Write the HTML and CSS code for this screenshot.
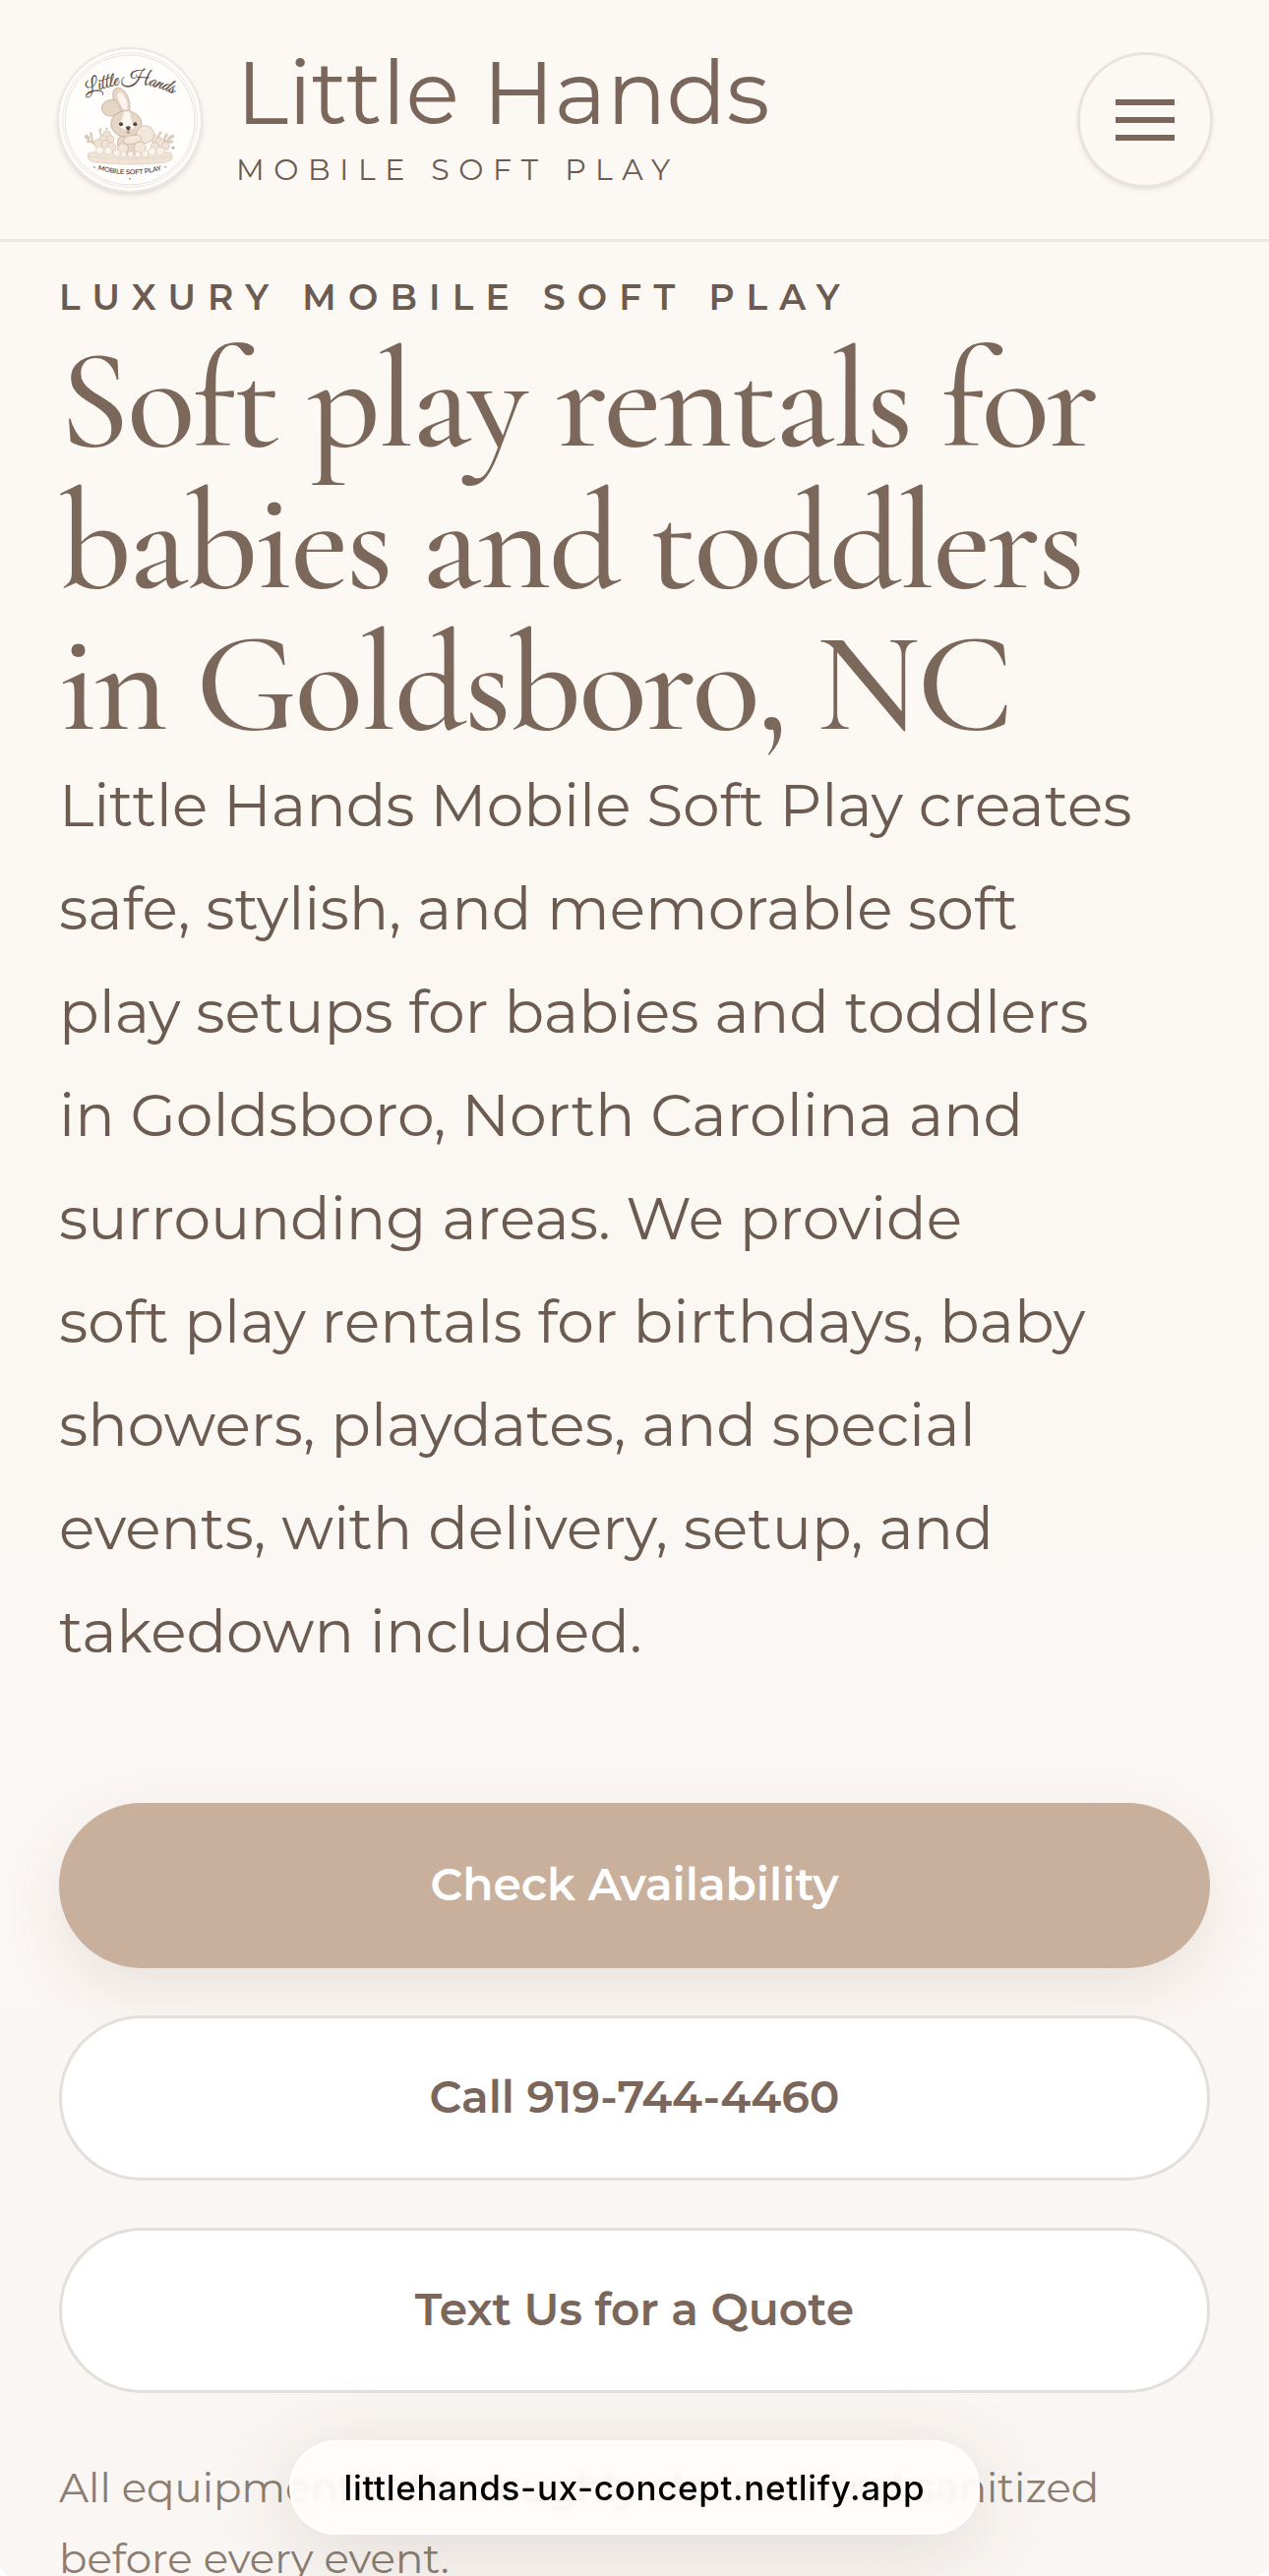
FILE: index.html
```html
<!DOCTYPE html>
<html lang="en">
<head>
    <meta charset="UTF-8">
    <meta name="viewport" content="width=device-width, initial-scale=1.0">
    <title>Little Hands Mobile Soft Play</title>
    <link rel="stylesheet" href="styles.css">
</head>
<body>
    <div class="page">
        <header class="site-header">
            <a class="brand" href="#">
                <svg class="brand-logo" viewBox="60 57 432 432" aria-hidden="true">
                    <defs>
                        <path id="arcTop" d="M142 202 Q276 126 418 198"/>
                        <path id="arcBottom" d="M178 424 Q276 454 378 424"/>
                    </defs>
                    <circle cx="276" cy="273" r="216" fill="#fffefc"/>
                    <circle cx="276" cy="273" r="205" fill="none" stroke="#e9e5e1" stroke-width="3"/>
                    <circle cx="276" cy="273" r="198" fill="none" stroke="#d8d0c9" stroke-width="2"/>
                    <text class="logo-script"><textPath href="#arcTop" textLength="276">Little Hands</textPath></text>
                    <!-- flowers -->
                    <g fill="none" stroke="#cbbdad" stroke-width="4">
                        <path d="M172 350 Q152 334 138 324M166 344 Q158 326 160 314M198 340 Q186 318 184 304"/>
                        <path d="M372 346 Q392 332 410 324M382 340 Q380 324 388 316M362 340 Q360 324 370 312"/>
                    </g>
                    <g fill="#dccdbd">
                        <ellipse cx="147" cy="324" rx="10" ry="5" transform="rotate(35 147 324)"/>
                        <ellipse cx="158" cy="318" rx="9" ry="4" transform="rotate(75 158 318)"/>
                        <ellipse cx="153" cy="338" rx="10" ry="5"/>
                        <ellipse cx="401" cy="325" rx="11" ry="5" transform="rotate(-30 401 325)"/>
                        <ellipse cx="387" cy="321" rx="9" ry="4" transform="rotate(-70 387 321)"/>
                        <ellipse cx="399" cy="339" rx="11" ry="5"/>
                        <circle cx="186" cy="303" r="5"/><circle cx="205" cy="300" r="4"/><circle cx="369" cy="312" r="5"/>
                        <circle cx="408" cy="358" r="4" fill="#b5a797"/>
                    </g>
                    <g fill="#f0e3d5" stroke="#d3bfab" stroke-width="2">
                        <circle cx="206" cy="318" r="12"/><circle cx="216" cy="332" r="12"/><circle cx="195" cy="332" r="12"/>
                        <circle cx="180" cy="344" r="13"/><circle cx="202" cy="348" r="13"/><circle cx="220" cy="354" r="13"/>
                        <circle cx="350" cy="330" r="13"/><circle cx="368" cy="340" r="13"/><circle cx="385" cy="352" r="12"/>
                        <circle cx="352" cy="354" r="13"/>
                    </g>
                    <!-- cushion -->
                    <path d="M148 380 Q148 371 160 371H392Q405 371 405 382V390Q399 401 372 404Q276 413 178 403Q150 399 148 389Z" fill="#f0e4d7" stroke="#d8c7b5" stroke-width="2"/>
                    <path d="M150 384Q276 398 404 384M200 390V404M240 393V407M300 393V408M352 390V405" fill="none" stroke="#dfd1c1" stroke-width="2"/>
                    <!-- bunny -->
                    <g fill="#e6d6c6" stroke="#bba590" stroke-width="2">
                        <path d="M246 255 C220 217 217 178 237 175 C260 172 284 215 274 251Z"/>
                        <path d="M242 252 C221 270 191 260 190 238 C190 220 209 207 231 213 Q242 222 250 244Z"/>
                        <ellipse cx="278" cy="344" rx="40" ry="36"/>
                        <ellipse cx="265" cy="285" rx="47" ry="40"/>
                    </g>
                    <path d="M255 239 C238 211 234 191 243 188 C256 188 272 214 268 242Z" fill="#fbf4ee"/>
                    <path d="M258 247 Q254 273 243 291 Q268 315 292 294 Q277 276 276 247Z" fill="#fbf5ef"/>
                    <g fill="#f3e7db" stroke="#c8b39e" stroke-width="2">
                        <circle cx="323" cy="317" r="27"/>
                        <path d="M309 321 Q275 315 258 329 Q253 343 268 346 Q297 347 311 334Z"/>
                        <circle cx="255" cy="360" r="16"/><circle cx="307" cy="357" r="18"/>
                    </g>
                    <g fill="#fbf3ea" stroke="#dccbb9" stroke-width="2">
                        <circle cx="184" cy="365" r="12"/><circle cx="210" cy="367" r="12"/><circle cx="236" cy="374" r="11"/>
                        <circle cx="257" cy="377" r="9"/><circle cx="278" cy="378" r="9"/><circle cx="300" cy="378" r="9"/>
                        <circle cx="323" cy="376" r="10"/><circle cx="344" cy="370" r="12"/><circle cx="369" cy="368" r="12"/>
                    </g>
                    <circle cx="249" cy="286" r="6" fill="#54463e"/>
                    <circle cx="292" cy="286" r="6" fill="#54463e"/>
                    <path d="M263 295 Q271 289 279 295 Q276 305 271 305 Q266 304 263 295Z" fill="#5d4c43"/>
                    <path d="M271 304V310M265 310Q271 316 277 310" fill="none" stroke="#765f52" stroke-width="2"/>
                    <g fill="#efcebf" opacity=".6"><circle cx="247" cy="306" r="7"/><circle cx="294" cy="306" r="7"/></g>
                    <text class="logo-small"><textPath href="#arcBottom" textLength="198">MOBILE SOFT PLAY</textPath></text>
                    <g fill="#aaa099"><circle cx="168" cy="417" r="3"/><circle cx="385" cy="416" r="3"/><circle cx="276" cy="452" r="3"/></g>
                </svg>
                <span class="brand-text">
                    <span class="brand-name">Little Hands</span>
                    <span class="brand-tag">MOBILE SOFT PLAY</span>
                </span>
            </a>
            <button class="menu-toggle" aria-label="Menu">
                <span></span>
                <span></span>
                <span></span>
            </button>
        </header>

        <main class="hero">
            <p class="eyebrow">LUXURY MOBILE SOFT PLAY</p>
            <h1>
                Soft play rentals for<br>
                babies and toddlers<br>
                in Goldsboro, NC
            </h1>
            <p class="lead">
                Little Hands Mobile Soft Play creates<br>
                safe, stylish, and memorable soft<br>
                play setups for babies and toddlers<br>
                in Goldsboro, North Carolina and<br>
                surrounding areas. We provide<br>
                soft play rentals for birthdays, baby<br>
                showers, playdates, and special<br>
                events, with delivery, setup, and<br>
                takedown included.
            </p>
            <div class="actions">
                <a class="btn btn-primary" href="#">Check Availability</a>
                <a class="btn" href="#">Call 919-744-4460</a>
                <a class="btn" href="#">Text Us for a Quote</a>
            </div>
            <p class="note">All equipment is thoroughly cleaned and sanitized<br>before every event.</p>
        </main>

        <div class="url-pill">littlehands-ux-concept.netlify.app</div>
    </div>
</body>
</html>
```

FILE: styles.css
```css
* {
    box-sizing: border-box;
}
html {
    background: #fff;
}
body {
    margin: 0;
    font-family: Montserrat, Inter, "Open Sans", sans-serif;
    color: #6b5b50;
}
a {
    color: inherit;
    text-decoration: none;
}
.page {
    position: relative;
    height: 2619px;
    overflow: hidden;
    background: linear-gradient(#fcf8f4, #faf6f3);
    border-radius: 0 0 14px 14px;
}

/* header */
.site-header {
    display: flex;
    justify-content: space-between;
    align-items: center;
    height: 246px;
    padding: 0 60px;
    border-bottom: 3px solid #ebe7e3;
}
.brand {
    display: flex;
    align-items: center;
    gap: 36px;
}
.brand-logo {
    width: 144px;
    height: 144px;
    border-radius: 50%;
    box-shadow: 0 0 0 2px #ebe7e4, 0 3px 6px rgba(90, 75, 65, 0.25);
}
.logo-script {
    font-family: "Great Vibes", "Dancing Script", "Liberation Serif", cursive;
    font-size: 60px;
    fill: #54453e;
    stroke: #54453e;
    stroke-width: 0.6px;
}
.logo-small {
    font-size: 21px;
    font-weight: 600;
    fill: #6b5d54;
}
.brand-text {
    display: flex;
    flex-direction: column;
    gap: 16px;
    margin-top: -4px;
    white-space: nowrap;
}
.brand-name {
    font-size: 90px;
    line-height: 90px;
    color: #7a665a;
}
.brand-tag {
    font-size: 30px;
    line-height: 36px;
    letter-spacing: 0.32em;
}
.menu-toggle {
    display: flex;
    flex-direction: column;
    justify-content: center;
    align-items: center;
    gap: 12px;
    width: 132px;
    height: 132px;
    padding: 0;
    border: 0;
    border-radius: 50%;
    background: #fcf9f4;
    box-shadow: 0 0 0 3px #e8e3df, 0 3px 6px rgba(90, 75, 65, 0.22);
}
.menu-toggle span {
    width: 60px;
    height: 6px;
    background: #7a665a;
}

/* hero */
.hero {
    padding: 29px 60px 0;
    white-space: nowrap;
}
.eyebrow {
    margin: 0 0 6px;
    font-size: 36px;
    line-height: 54px;
    font-weight: 600;
    letter-spacing: 12.2px;
}
h1 {
    margin: 0;
    font-family: "Cormorant Garamond", "Liberation Serif", serif;
    font-size: 144px;
    line-height: 144px;
    font-weight: 500;
    color: #7c685b;
    letter-spacing: -0.02em;
}
.lead {
    margin: -1px 0 0;
    font-size: 60px;
    line-height: 105px;
}
.actions {
    display: flex;
    flex-direction: column;
    gap: 48px;
    margin-top: 122px;
}
.btn {
    display: flex;
    justify-content: center;
    align-items: center;
    height: 168px;
    padding-bottom: 3px;
    border: 3px solid #e3e0dc;
    border-radius: 84px;
    background: #fff;
    color: #7a665a;
    font-size: 45.6px;
    font-weight: 600;
}
.btn-primary {
    background: #c8b09c;
    border-color: #c8b09c;
    color: #fff;
    box-shadow: 0 24px 60px rgba(122, 102, 90, 0.12);
}
.note {
    margin: 60px 0 0;
    font-size: 42px;
    line-height: 72px;
    color: #8b7d72;
}

/* floating address bar */
.url-pill {
    position: absolute;
    left: 294px;
    top: 2481px;
    display: flex;
    justify-content: center;
    align-items: center;
    width: 702px;
    height: 96px;
    border: 3px solid #fff;
    border-radius: 48px;
    background: rgba(255, 252, 249, 0.91);
    backdrop-filter: blur(2px);
    box-shadow: 0 16px 90px rgba(60, 50, 45, 0.14);
    font-family: Inter, sans-serif;
    font-size: 35px;
    font-weight: 500;
    letter-spacing: 0.65px;
    color: #000;
}
```
